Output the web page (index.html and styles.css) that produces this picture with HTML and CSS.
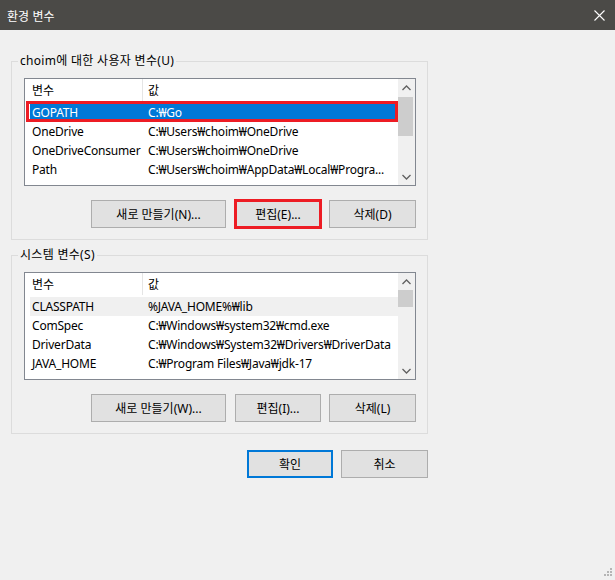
FILE: index.html
```html
<!DOCTYPE html>
<html lang="ko">
<head>
  <meta charset="UTF-8">
  <title>환경 변수</title>
  <link rel="stylesheet" href="styles.css">
</head>
<body>
  <div class="window">
    <div class="titlebar">
      <span class="title">환경 변수</span>
      <svg class="close" width="11" height="11" viewBox="0 0 11 11">
        <path d="M0.5 0.5 L10.5 10.5 M10.5 0.5 L0.5 10.5" stroke="#fff" stroke-width="1.1" fill="none"/>
      </svg>
    </div>

    <div class="content">
      <fieldset class="group group-user">
        <legend>choim에 대한 사용자 변수(U)</legend>
        <div class="list">
          <div class="list-view">
            <div class="list-head">
              <div class="name">변수</div>
              <div class="value">값</div>
            </div>
            <div class="row selected marked">
              <div class="name">GOPATH</div>
              <div class="value">C:₩Go</div>
            </div>
            <div class="row">
              <div class="name">OneDrive</div>
              <div class="value">C:₩Users₩choim₩OneDrive</div>
            </div>
            <div class="row">
              <div class="name">OneDriveConsumer</div>
              <div class="value">C:₩Users₩choim₩OneDrive</div>
            </div>
            <div class="row">
              <div class="name">Path</div>
              <div class="value">C:₩Users₩choim₩AppData₩Local₩Progra...</div>
            </div>
          </div>
          <div class="scrollbar">
            <div class="arrow">
              <svg width="9" height="6" viewBox="0 0 9 6"><path d="M0.5 5 L4.5 1 L8.5 5" stroke="#606060" stroke-width="1.3" fill="none"/></svg>
            </div>
            <div class="track">
              <div class="thumb thumb-user"></div>
            </div>
            <div class="arrow">
              <svg width="9" height="6" viewBox="0 0 9 6"><path d="M0.5 1 L4.5 5 L8.5 1" stroke="#606060" stroke-width="1.3" fill="none"/></svg>
            </div>
          </div>
        </div>
        <div class="buttons">
          <button class="btn wide">새로 만들기(N)...</button>
          <button class="btn marked-btn">편집(E)...</button>
          <button class="btn last">삭제(D)</button>
        </div>
      </fieldset>

      <fieldset class="group group-system">
        <legend>시스템 변수(S)</legend>
        <div class="list">
          <div class="list-view">
            <div class="list-head">
              <div class="name">변수</div>
              <div class="value">값</div>
            </div>
            <div class="row inactive">
              <div class="name">CLASSPATH</div>
              <div class="value">%JAVA_HOME%₩lib</div>
            </div>
            <div class="row">
              <div class="name">ComSpec</div>
              <div class="value">C:₩Windows₩system32₩cmd.exe</div>
            </div>
            <div class="row">
              <div class="name">DriverData</div>
              <div class="value">C:₩Windows₩System32₩Drivers₩DriverData</div>
            </div>
            <div class="row">
              <div class="name">JAVA_HOME</div>
              <div class="value">C:₩Program Files₩Java₩jdk-17</div>
            </div>
          </div>
          <div class="scrollbar">
            <div class="arrow">
              <svg width="9" height="6" viewBox="0 0 9 6"><path d="M0.5 5 L4.5 1 L8.5 5" stroke="#606060" stroke-width="1.3" fill="none"/></svg>
            </div>
            <div class="track">
              <div class="thumb thumb-system"></div>
            </div>
            <div class="arrow">
              <svg width="9" height="6" viewBox="0 0 9 6"><path d="M0.5 1 L4.5 5 L8.5 1" stroke="#606060" stroke-width="1.3" fill="none"/></svg>
            </div>
          </div>
        </div>
        <div class="buttons">
          <button class="btn wide">새로 만들기(W)...</button>
          <button class="btn">편집(I)...</button>
          <button class="btn last">삭제(L)</button>
        </div>
      </fieldset>

      <div class="dialog-buttons">
        <button class="btn default">확인</button>
        <button class="btn last">취소</button>
      </div>
    </div>

    <svg class="grip" width="12" height="12" viewBox="0 0 12 12">
      <rect x="9" y="0" width="2" height="2" fill="#b5b5b5"/>
      <rect x="6" y="3" width="2" height="2" fill="#b5b5b5"/>
      <rect x="9" y="3" width="2" height="2" fill="#b5b5b5"/>
      <rect x="3" y="6" width="2" height="2" fill="#b5b5b5"/>
      <rect x="6" y="6" width="2" height="2" fill="#b5b5b5"/>
      <rect x="9" y="6" width="2" height="2" fill="#b5b5b5"/>
    </svg>
  </div>
</body>
</html>
```

FILE: styles.css
```css
* {
  box-sizing: border-box;
}

body {
  margin: 0;
  background: #f0f0f0;
  font-family: "Noto Sans", "Noto Sans CJK KR", sans-serif;
  font-size: 12px;
  color: #000;
}

.window {
  position: relative;
  width: 615px;
  height: 580px;
  overflow: hidden;
}

.titlebar {
  height: 30px;
  background: #4b4a47;
  color: #fff;
  display: flex;
  align-items: center;
  justify-content: space-between;
  padding: 0 10px 0 7px;
}

.title {
  font-family: "Noto Sans CJK KR", sans-serif;
  font-size: 12px;
}

.content {
  padding: 23px 0 0 11px;
}

.group {
  width: 417px;
  margin: 0;
  padding: 9px 11px 11px 12px;
  border: 1px solid #dcdcdc;
}

.group legend {
  margin-left: -6px;
  padding: 0 2px;
  line-height: 16px;
  letter-spacing: 0.3px;
}

.group-system {
  margin-top: 7px;
}

.list {
  display: flex;
  height: 108px;
  border: 1px solid #828790;
  background: #fff;
}

.list-view {
  flex: 1;
  overflow: hidden;
}

.list-head {
  display: flex;
  height: 24px;
  padding-bottom: 2px;
  align-items: center;
}

.list-head .name {
  width: 118px;
  height: 100%;
  padding-left: 7px;
  border-right: 1px solid #e5e5e5;
  display: flex;
  align-items: center;
}

.list-head .value {
  padding-left: 5px;
}

.row {
  position: relative;
  display: flex;
  align-items: center;
  height: 19px;
  margin-left: 5px;
  white-space: nowrap;
  letter-spacing: -0.2px;
}

.row .name {
  width: 113px;
  padding-left: 2px;
}

.row .value {
  padding-left: 5px;
}

.row.selected {
  background: #0078d7;
  color: #fff;
}

.row.inactive {
  background: #f0f0f0;
}

.row.marked::after {
  content: "";
  position: absolute;
  left: -4px;
  top: -2px;
  right: 0;
  bottom: 0;
  border: 3px solid #ed1c24;
}

.scrollbar {
  width: 17px;
  background: #f0f0f0;
  display: flex;
  flex-direction: column;
}

.arrow {
  height: 17px;
  display: flex;
  align-items: center;
  justify-content: center;
}

.track {
  flex: 1;
}

.thumb {
  background: #cdcdcd;
  margin-right: 2px;
}

.thumb-user {
  margin-top: 1px;
  height: 39px;
}

.thumb-system {
  height: 17px;
}

.buttons {
  display: flex;
  justify-content: flex-end;
  gap: 8px;
  margin-top: 14px;
}

.btn {
  width: 86px;
  height: 28px;
  padding: 0;
  border: 1px solid #adadad;
  background: #e1e1e1;
  font-family: inherit;
  font-size: 12px;
  color: #000;
}

.btn.wide {
  width: 135px;
  margin-right: 1px;
}

.btn.last {
  width: 87px;
}

.btn.marked-btn {
  outline: 3px solid #ed1c24;
  outline-offset: -2px;
}

.btn.default {
  border: 2px solid #0078d7;
}

.dialog-buttons {
  width: 417px;
  display: flex;
  justify-content: flex-end;
  gap: 8px;
  margin-top: 16px;
}

.grip {
  position: absolute;
  right: 2px;
  bottom: 0;
}
```
